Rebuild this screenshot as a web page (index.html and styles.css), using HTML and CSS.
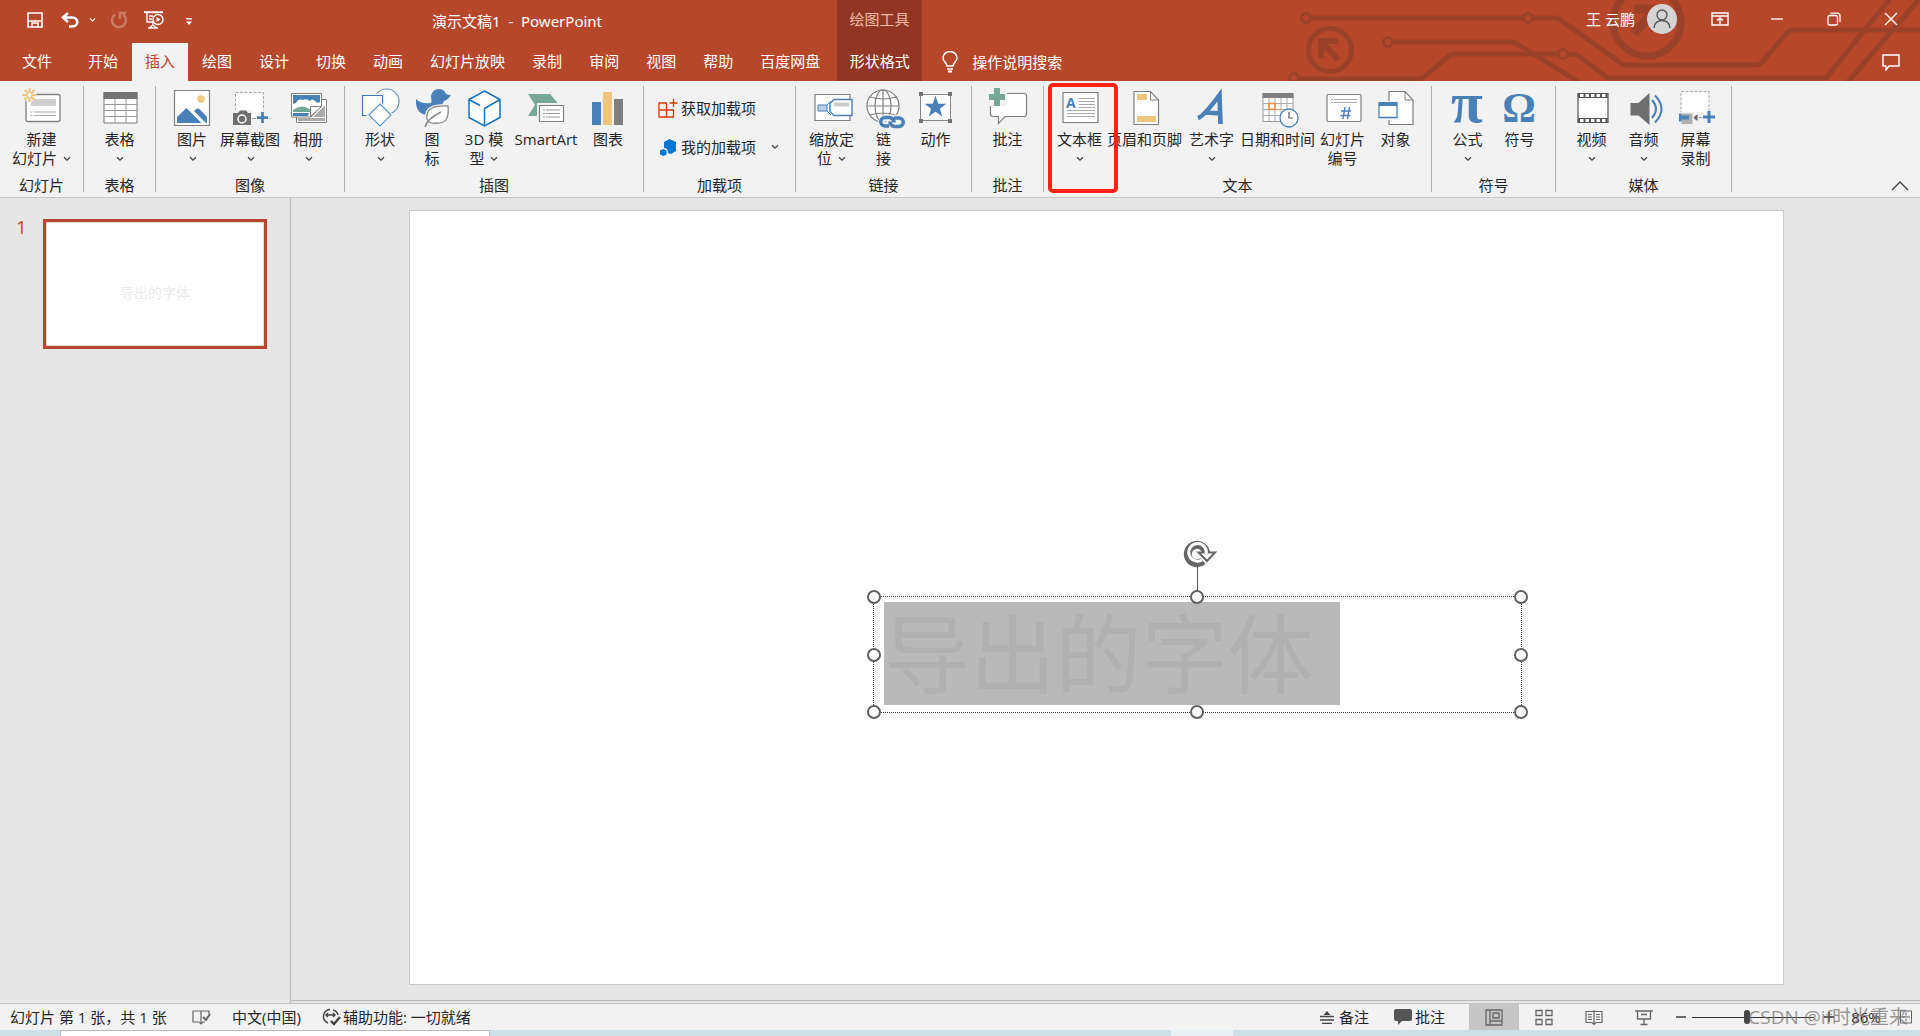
FILE: index.html
```html
<!DOCTYPE html>
<html lang="zh-CN">
<head>
<meta charset="utf-8">
<title>演示文稿1 - PowerPoint</title>
<link rel="stylesheet" href="styles.css">
</head>
<body>
<svg class="defs" aria-hidden="true">
  <symbol id="chev" viewBox="0 0 8 6"><path d="M1 1.200l3 3 3-3" fill="none" stroke="currentColor" stroke-width="1.300"/></symbol>
  <symbol id="plus" viewBox="0 0 12 12"><path d="M4.500 0h3v4.500H12v3H7.500V12h-3V7.500H0v-3h4.500z"/></symbol>
</svg>

<header class="header">
  <svg class="circuit" viewBox="0 0 640 81" fill="none" stroke="#9c4129" stroke-width="5" aria-hidden="true">
    <path d="M31 18H243M253 18H275q4 0 7 3L338 61q4 4 8 4H476q4 0 6-3L506 34q3-4 7-4H640"/>
    <path d="M113 42H230q5 0 9 3L302 84"/>
    <path d="M19 79H138q4 0 7-3L168 57q3-3 7-3H278M288 54H292q4 0 8 3L328 78H546L612-4M566 84L642-4"/>
    <g stroke-width="3"><circle cx="26" cy="18" r="4.500"/><circle cx="248" cy="18" r="4.500"/><circle cx="108" cy="42" r="4.500"/><circle cx="283" cy="54" r="4.500"/><circle cx="14" cy="78" r="4.500"/></g>
    <circle cx="50" cy="50" r="21.500"/><circle cx="367" cy="22" r="34" stroke-width="7"/>
    <path d="M41 58V41H58M41 41L58 60" stroke-width="6"/>
    <path d="M354 9H375V32M375 9L354 34" stroke-width="9"/>
  </svg>
  <div class="titlebar">
    <div class="qat">
      <button class="qb save" aria-label="保存"><svg width="16" height="16" viewBox="0 0 16 16" fill="none" stroke="#fff" stroke-width="1.600"><path d="M1 1h14v14H1zM1 9h14"/><path d="M5 15v-4h6v4" stroke-width="1.500"/></svg></button>
      <button class="qb undo" aria-label="撤消"><svg width="18" height="16" viewBox="0 0 18 16" fill="none" stroke="#fff" stroke-width="2.600"><path d="M7 1L2 5.500l5 4.500M2.500 5.500H11c7 0 7 9 0 9H8"/></svg></button>
      <button class="qb drop" aria-label="撤消列表"><svg width="7" height="6"><use href="#chev"/></svg></button>
      <button class="qb redo" aria-label="重复" disabled><svg width="18" height="18" viewBox="0 0 18 18" fill="none" stroke="#cc7b64" stroke-width="2.400"><path d="M5 3.500A7 7 0 1 0 13 3.500M10 8V2h6"/></svg></button>
      <button class="qb show" aria-label="从头开始"><svg width="20" height="18" viewBox="0 0 20 18" fill="none" stroke="#fff" stroke-width="1.400"><path d="M0 1.200h19" stroke-width="2"/><path d="M3 2v9h6M5 5h4M5 8h3M9 11v3M5 17l4-3 4 3M4 17h10"/><circle cx="14" cy="8.500" r="5"/><path d="M12.500 6l4 2.500-4 2.500z" fill="#fff" stroke="none"/></svg></button>
      <button class="qb more" aria-label="自定义"><svg width="6" height="8" viewBox="0 0 6 8" fill="#fff"><path d="M0 0h6v1.500H0zM0 3.500h6L3 7z"/></svg></button>
    </div>
    <h1 class="doc">演示文稿1&nbsp; -&nbsp; PowerPoint</h1>
    <div class="ctx-title">绘图工具</div>
    <div class="account">
      <span>王 云鹏</span>
      <svg width="30" height="30" viewBox="0 0 30 30" fill="none" stroke="#555" stroke-width="1.400"><circle cx="15" cy="15" r="15" fill="#d4d4d4" stroke="none"/><circle cx="15" cy="11" r="5"/><path d="M7 24c0-10 16-10 16 0"/></svg>
    </div>
    <div class="winctl" role="group">
      <button aria-label="功能区显示选项"><svg width="18" height="14" viewBox="0 0 18 14" fill="none" stroke="#fff" stroke-width="1.400"><path d="M1 1h16v12H1zM1 4h16M9 12V6M6 8.500L9 6l3 2.500"/></svg></button>
      <button aria-label="最小化"><svg width="14" height="14" viewBox="0 0 14 14"><path d="M1 7h12" stroke="#fff" stroke-width="1.300"/></svg></button>
      <button aria-label="还原"><svg width="14" height="14" viewBox="0 0 14 14" fill="none" stroke="#fff" stroke-width="1.300"><rect x="1" y="3.500" width="9.500" height="9.500" rx="1.500"/><path d="M3.500 1.200H10q3 0 3 3V10"/></svg></button>
      <button aria-label="关闭"><svg width="14" height="14" viewBox="0 0 14 14"><path d="M1 1l12 12M13 1L1 13" stroke="#fff" stroke-width="1.400"/></svg></button>
    </div>
  </div>
  <nav class="tabs">
    <button class="file">文件</button>
    <button>开始</button><button class="active">插入</button><button>绘图</button><button>设计</button><button>切换</button><button>动画</button><button>幻灯片放映</button><button>录制</button><button>审阅</button><button>视图</button><button>帮助</button><button>百度网盘</button><button class="ctx">形状格式</button>
    <label class="tell"><svg width="16" height="22" viewBox="0 0 16 22" fill="none" stroke="#fff" stroke-width="1.500"><path d="M5 15c0-3-4-4-4-8a7 6.500 0 0 1 14 0c0 4-4 5-4 8zM5 18h6"/><path d="M6 20.500h4" stroke-width="2"/></svg><input type="text" placeholder="操作说明搜索" aria-label="操作说明搜索"></label>
    <button class="notes" aria-label="批注"><svg width="18" height="17" viewBox="0 0 18 17" fill="none" stroke="#fff" stroke-width="1.400"><path d="M1 1h16v11H7l-3 4v-4H1z"/></svg></button>
  </nav>
</header>

<section class="ribbon" aria-label="插入">
  <div class="group g-slide"><div class="items">
    <button class="tool w64"><svg class="ic" viewBox="0 0 44 42"><rect x="6" y="8.500" width="34" height="27" rx="2" fill="#fff" stroke="#7f7f7f" stroke-width="1.300"/><path d="M11 13h25v7H11z" fill="#d0d0d0"/><path d="M10.500 26h2M14 26h22M10.500 29.500h2M14 29.500h22" stroke="#aaa"/><circle cx="9.500" cy="9" r="7" fill="#f2f2f2"/><path d="M9.500 2v14M2.500 9h14M4.500 4l10 10M14.500 4l-10 10" stroke="#edc57c" stroke-width="2"/><circle cx="9.500" cy="9" r="2.500" fill="#fff" stroke="#edc57c"/></svg><span>新建<br>幻灯片 <svg class="cv"><use href="#chev"/></svg></span></button>
  </div><h2>幻灯片</h2></div>

  <div class="group g-table"><div class="items">
    <button class="tool"><svg class="ic" viewBox="0 0 44 42"><path d="M6 6.500h33V37H6z" fill="#fff" stroke="#777"/><path d="M5.500 6h34v7h-34z" fill="#737373"/><path d="M17 13v24M28 13v24M6 18.500h33M6 24.500h33M6 30.500h33" stroke="#999"/></svg><span>表格<br><svg class="cv"><use href="#chev"/></svg></span></button>
  </div><h2>表格</h2></div>

  <div class="group g-image"><div class="items">
    <button class="tool"><svg class="ic" viewBox="0 0 44 42"><path d="M4.500 4.500h35v35h-35z" fill="#fff" stroke="#7f7f7f" stroke-width="1.200"/><circle cx="31" cy="13" r="3.700" fill="#edc57c"/><path d="M7 37V31l9.500-9L31.500 37zM24 25l3-2.500q1.500-.5 3 1L37 31v6H36z" fill="#4a80b8"/></svg><span>图片<br><svg class="cv"><use href="#chev"/></svg></span></button>
    <button class="tool w64"><svg class="ic" viewBox="0 0 44 42"><path d="M7.500 6.500h28v26h-28z" fill="#fff" stroke="#aaa" stroke-dasharray="3 1.500"/><path d="M4 24h20v16H4z" fill="#f2f2f2"/><path d="M5 27h5l2-2.500h6l2 2.500h3v12H5z" fill="#6f6f6f"/><circle cx="14" cy="33" r="4" fill="none" stroke="#fff" stroke-width="1.500"/><circle cx="34.500" cy="31.500" r="7" fill="#f2f2f2"/><path d="M25 32.500h3" stroke="#999"/><use href="#plus" x="29" y="26" width="11" height="11" fill="#4a80b8"/></svg><span>屏幕截图<br><svg class="cv"><use href="#chev"/></svg></span></button>
    <button class="tool"><svg class="ic" viewBox="0 0 44 42"><path d="M10.500 13.500h30v23h-30z" fill="#fff" stroke="#7f7f7f"/><path d="M12 32h27v3H12zM27 31L39 19v12z" fill="#aaa"/><path d="M5.500 7.500h30V20L25 31H5.500z" fill="#fff" stroke="#7f7f7f"/><path d="M7 9h27v7q-3 2-5-1-3-3-5 0-4-3-7-1-5-2-7 3l-3 1z" fill="#4a80b8"/><path d="M7 24q9-7 18 0v2H7z" fill="#6fa695"/><path d="M7 27h16l-1 3H7z" fill="#4a80b8"/><path d="M24.500 30.500v-10h11z" fill="#fff" stroke="#7f7f7f"/></svg><span>相册<br><svg class="cv"><use href="#chev"/></svg></span></button>
  </div><h2>图像</h2></div>

  <div class="group g-illus"><div class="items">
    <button class="tool"><svg class="ic" viewBox="0 0 44 42" fill="#fff" stroke="#5f94cc" stroke-width="1.200"><circle cx="28.500" cy="15.500" r="12.500"/><path d="M4.500 9.500h20v20h-20z" stroke="#f2f2f2" stroke-width="4"/><path d="M4.500 9.500h20v20h-20z" stroke="#3f78b5"/><path d="M22 18l11 11-11 11-11-11z" stroke="#f2f2f2" stroke-width="4"/><path d="M22 18l11 11-11 11-11-11z"/></svg><span>形状<br><svg class="cv"><use href="#chev"/></svg></span></button>
    <button class="tool"><svg class="ic" viewBox="0 0 44 42"><path d="M6 13q4 5 15 4 1-2 0-6 1-8 8-8 5 0 7 5 2 1 5 1-3 5-7 6-2 3-1 5 0 9-11 9H16Q5 27 6 13z" fill="#4a80b8"/><path d="M38 20q-20-1-21 9-1 4 2 7-3 2-4 5M38 20q2 18-11 17-5 1-8-1M19 36q6-8 12-10" fill="#f2f2f2" stroke="#f2f2f2" stroke-width="4"/><path d="M38 20q-20-1-21 9-1 4 2 7 3 2 8 1 13 1 11-17z" fill="#fff" stroke="#888" stroke-width="1.300"/><path d="M31 26q-14 7-16 15" fill="none" stroke="#888" stroke-width="1.500"/></svg><span>图<br>标</span></button>
    <button class="tool"><svg class="ic" viewBox="0 0 44 42" fill="#fff" stroke="#1273c4" stroke-width="1.500"><path d="M22.500 5L38 13.500v18L22.500 40 7 31.500v-18z"/><path d="M7 13.500l11 6M38 13.500L22.500 22.500V40" fill="none"/></svg><span>3D 模<br>型 <svg class="cv"><use href="#chev"/></svg></span></button>
    <button class="tool w72"><svg class="ic" viewBox="0 0 44 42"><path d="M4 8h22l9.500 11v11H4l7-11z" fill="#76a797"/><path d="M13 17h30v21H13z" fill="#f2f2f2"/><path d="M15.500 19.500h24v16h-24z" fill="#fff" stroke="#7f7f7f" stroke-width="1.200"/><path d="M19 24h2M22 24h14M19 27.500h2M22 27.500h14M19 31h2M22 31h14" stroke="#999"/></svg><span>SmartArt</span></button>
    <button class="tool"><svg class="ic" viewBox="0 0 44 42"><path d="M6 16h9v23H6z" fill="#4a80b8"/><path d="M17 6h9v33h-9z" fill="#edc57c"/><path d="M28 13h9v26h-9z" fill="#7f7f7f"/></svg><span>图表</span></button>
  </div><h2>插图</h2></div>

  <div class="group g-addin"><div class="addins">
    <button><svg width="20" height="20" viewBox="0 0 20 20" fill="none" stroke="#d83b01" stroke-width="1.300"><path d="M1 5h7.500v14H1zM1 12h14.500v7H1M8.500 12v7M15.500 1v8M11.500 5h8"/></svg>获取加载项</button>
    <button><svg width="20" height="20" viewBox="0 0 20 20" fill="#0078d4"><path d="M11.500 2L18 5v9l-5 3-3-1q0-5-4-5V5z"/><path d="M5.500 12l3 1.500v4l-3 1.500-3.500-1.500v-4z"/></svg>我的加载项<svg class="cv"><use href="#chev"/></svg></button>
  </div><h2>加载项</h2></div>

  <div class="group g-link"><div class="items">
    <button class="tool"><svg class="ic" viewBox="0 0 44 42"><path d="M5 8.500h35v26H5z" fill="#fff" stroke="#7f7f7f" stroke-width="1.200"/><path d="M8 19h9v6H8zM17 19l4-4M17 25l4 4" fill="#bccfe2" stroke="#4a80b8"/><path d="M24 13.500h18v16H24l-4-4v-8z" fill="#fff" stroke="#4a80b8" stroke-width="1.400"/><path d="M24 16.500h15v4H24z" fill="#ccc"/></svg><span>缩放定<br>位 <svg class="cv"><use href="#chev"/></svg></span></button>
    <button class="tool"><svg class="ic" viewBox="0 0 44 42" fill="none"><g stroke="#7f7f7f" stroke-width="1.200"><circle cx="21" cy="20" r="16" fill="#fff"/><ellipse cx="21" cy="20" rx="8" ry="16"/><path d="M21 4v32M5 20h32M8 11q13 4 26 0M8 29q13-4 26 0"/></g><g stroke="#f2f2f2" stroke-width="6.500"><rect x="19.500" y="32" width="13" height="8" rx="4"/><rect x="27.500" y="32" width="13" height="8" rx="4"/></g><path d="M27 40h-4a4 4 0 0 1 0-8.500h5q4 1 4 5M32 32h5a4 4 0 0 1 0 8.500h-5q-4-1-4-5" stroke="#4a80b8" stroke-width="3.500"/></svg><span>链<br>接</span></button>
    <button class="tool"><svg class="ic" viewBox="0 0 44 42"><path d="M6.500 8.500h30v26h-30z" fill="#fff" stroke="#888"/><path d="M5 6h4v4H5zM34 6h4v4h-4zM5 33h4v4H5zM34 33h4v4h-4z" fill="#737373"/><path d="M21.500 10l2.800 7.700h8l-6.400 5 2.400 7.800-6.800-4.700-6.800 4.700 2.400-7.800-6.400-5h8z" fill="#4a80b8"/></svg><span>动作</span></button>
  </div><h2>链接</h2></div>

  <div class="group g-note"><div class="items">
    <button class="tool"><svg class="ic" viewBox="0 0 44 42"><path d="M7 7.500h31q2.500 0 2.500 2v18.500q0 2.500-2.500 2.500H19l-6.500 7v-7H7q-2.500 0-2.500-2.500V10z" fill="#fff" stroke="#7f7f7f" stroke-width="1.200"/><path d="M1 1h20v19H1z" fill="#f2f2f2"/><path d="M8 2h6v6h5v6h-5v6H8v-6H3V8h5z" fill="#76a797"/></svg><span>批注</span></button>
  </div><h2>批注</h2></div>

  <div class="group g-text"><div class="items">
    <div class="marked"><button class="tool"><svg class="ic" viewBox="0 0 44 42"><path d="M5 6.500h35v30H5z" fill="#fff" stroke="#7f7f7f" stroke-width="1.200"/><text x="8" y="22" class="gA">A</text><path d="M21 12.500h16M21 15.500h16M21 18.500h16M21 21.500h16M9 24.500h28M9 27.500h28M9 30.500h28" stroke="#aaa"/></svg><span>文本框<br><svg class="cv"><use href="#chev"/></svg></span></button><i class="mark"></i></div>
    <button class="tool w78"><svg class="ic" viewBox="0 0 44 42"><path d="M11 5.500h16.500l8 8.500v24.500H11z" fill="#fff" stroke="#7f7f7f" stroke-width="1.200"/><path d="M27.500 5.500V14h8" fill="none" stroke="#7f7f7f"/><path d="M14 8h10v6H14zM14 30h19v6H14z" fill="#edc57c"/></svg><span>页眉和页脚</span></button>
    <button class="tool w56"><svg class="ic" viewBox="0 0 44 42"><path d="M8 32Q14 30 29.500 9L30.500 38M16 26.500l14 1" fill="none" stroke="#4a80b8" stroke-width="4.600"/></svg><span>艺术字<br><svg class="cv"><use href="#chev"/></svg></span></button>
    <button class="tool w76"><svg class="ic" viewBox="0 0 44 42"><path d="M7 8h30v27.500H7z" fill="#fff" stroke="#999"/><path d="M6.500 7h31v5h-31z" fill="#7f7f7f"/><path d="M13 12v23M19 12v23M25 12v23M31 12v23M7 17.500h30M7 23.500h30M7 29.500h30" stroke="#aaa"/><path d="M13 17.500h6v6h-6z" fill="#fff" stroke="#ea8a3a" stroke-width="1.500"/><circle cx="33" cy="32" r="9" fill="#fff" stroke="#4a80b8" stroke-width="1.300"/><path d="M33 26v6h4" fill="none" stroke="#555" stroke-width="1.200"/></svg><span>日期和时间</span></button>
    <button class="tool w54"><svg class="ic" viewBox="0 0 44 42"><rect x="6" y="8.500" width="34" height="27" rx="1.500" fill="#fff" stroke="#7f7f7f" stroke-width="1.200"/><path d="M10 13.500h2M13 13.500h23M10 16.500h2M13 16.500h23" stroke="#aaa"/><path d="M24 21l-2 12M28.500 21l-2 12M20 25h10M19.500 29.500h10" stroke="#4a80b8" stroke-width="1.400"/></svg><span>幻灯片<br>编号</span></button>
    <button class="tool"><svg class="ic" viewBox="0 0 44 42"><path d="M15 5.500h16l8 8.500v24.500H15z" fill="#fff" stroke="#7f7f7f" stroke-width="1.200"/><path d="M31 5.500V14h8" fill="none" stroke="#7f7f7f"/><path d="M3 15h22v19H3z" fill="#f2f2f2"/><path d="M5 17h18v14.500H5z" fill="#fff" stroke="#4a80b8" stroke-width="1.300"/><path d="M5 16h18v4H5z" fill="#4a80b8"/></svg><span>对象</span></button>
  </div><h2>文本</h2></div>

  <div class="group g-sym"><div class="items">
    <button class="tool"><svg class="ic" viewBox="0 0 44 42"><text x="21" y="36" class="gS gPi">π</text></svg><span>公式<br><svg class="cv"><use href="#chev"/></svg></span></button>
    <button class="tool"><svg class="ic" viewBox="0 0 44 42"><text x="21" y="36" class="gS">Ω</text></svg><span>符号</span></button>
  </div><h2>符号</h2></div>

  <div class="group g-media"><div class="items">
    <button class="tool"><svg class="ic" viewBox="0 0 44 42"><path d="M8 7.500h30v29H8z" fill="#fff" stroke="#555" stroke-width="1.200"/><path d="M8 11.500h30M8 32.500h30" stroke="#555"/><path d="M8 9.500h30M8 34.500h30" stroke="#555" stroke-width="4" stroke-dasharray="2 3.500"/></svg><span>视频<br><svg class="cv"><use href="#chev"/></svg></span></button>
    <button class="tool"><svg class="ic" viewBox="0 0 44 42"><path d="M8.500 17h8L27.500 7v32l-11-9.500h-8z" fill="#6f6f6f"/><path d="M30 14q8 9 0 18M33 9.500q13 13.500 0 27" fill="none" stroke="#4a80b8" stroke-width="2"/></svg><span>音频<br><svg class="cv"><use href="#chev"/></svg></span></button>
    <button class="tool"><svg class="ic" viewBox="0 0 44 42"><path d="M7 5.500h28v26H7z" fill="#fff" stroke="#aaa" stroke-dasharray="3 1.500"/><path d="M3 26h40v14H3z" fill="#f2f2f2"/><path d="M7.500 27.500h11V38h-11z" fill="#b0b0b0"/><path d="M5 27.500h2.500v2H15v4H7.500v2H5z" fill="#4a80b8"/><path d="M20 31l3.500-3v7L20 32.500z" fill="#666"/><path d="M25 31.500h3" stroke="#999"/><use href="#plus" x="29" y="25" width="12" height="12" fill="#4a80b8"/></svg><span>屏幕<br>录制</span></button>
  </div><h2>媒体</h2></div>
  <button class="collapse" aria-label="折叠功能区"><svg width="18" height="11" viewBox="0 0 18 11"><path d="M1 10l8-8 8 8" fill="none" stroke="#444" stroke-width="1.400"/></svg></button>
</section>

<main class="work">
  <aside class="thumbs"><span class="num">1</span><div class="thumb">导出的字体</div></aside>
  <section class="stage">
    <div class="slide">
      <div class="tbox">
        <span class="sel">导出的字体</span>
        <i class="stem"></i>
        <svg class="rot" width="36" height="30" viewBox="0 0 36 30" fill="none"><path d="M21 22A9.200 9.200 0 1 1 24.200 15" stroke="#666" stroke-width="8"/><path d="M16.500 13.500H33L25 22z" fill="#fff" stroke="#666" stroke-width="2"/><path d="M20 21A8.800 8.800 0 1 1 24 16" stroke="#fff" stroke-width="3"/></svg>
        <i class="h nw"></i><i class="h n"></i><i class="h ne"></i><i class="h w"></i><i class="h e"></i><i class="h sw"></i><i class="h s"></i><i class="h se"></i>
      </div>
    </div>
  </section>
</main>

<footer class="status">
  <span class="count">幻灯片 第 1 张，共 1 张</span>
  <button class="spell" aria-label="拼写检查"><svg width="19" height="16" viewBox="0 0 19 16" fill="none" stroke="#666" stroke-width="1.200"><path d="M9 2H1v11h6l2 2 2-2h2M9 2v12M9 2h8v3"/><path d="M11 8l3 3 4-6" stroke-width="2"/></svg></button>
  <button class="lang">中文(中国)</button>
  <button class="acc"><svg width="20" height="18" viewBox="0 0 20 18" fill="none" stroke="#444" stroke-width="1.400"><path d="M9 1.500A7 7 0 0 0 7 15M12 2q4 1 5 5M5 7h9M7 5L5 7l2 2M12 5l2 2-2 2"/><path d="M10 13l3 3 6-7" stroke-width="2.400"/></svg>辅助功能: 一切就绪</button>
  <div class="right">
    <button class="rb"><svg width="14" height="14" viewBox="0 0 14 14" stroke="#444" stroke-width="1.300"><path d="M0 6.500h14M0 10h14M2 13.300h10"/><path d="M3.500 5L7 1l3.500 4z" fill="#444" stroke="none"/></svg>备注</button>
    <button class="rb cm"><svg width="18" height="16" viewBox="0 0 18 16" fill="#555"><path d="M2 0h14q2 0 2 2v8q0 2-2 2H8l-4 4v-4H2q-2 0-2-2V2q0-2 2-2z"/></svg>批注</button>
    <button class="view on" aria-label="普通"><svg width="18" height="17" viewBox="0 0 18 17" fill="none" stroke="#666" stroke-width="1.300"><path d="M1 1h16v15H1zM5 1v15M5 12h12M8 4h6v5H8z"/></svg></button>
    <button class="view" aria-label="幻灯片浏览"><svg width="18" height="17" viewBox="0 0 18 17" fill="none" stroke="#666" stroke-width="1.300"><path d="M1 1.500h6v5H1zM11 1.500h6v5h-6zM1 10.500h6v5H1zM11 10.500h6v5h-6z"/></svg></button>
    <button class="view" aria-label="阅读视图"><svg width="18" height="17" viewBox="0 0 18 17" fill="none" stroke="#666" stroke-width="1.200"><path d="M9 2.500H1v11h6l2 2 2-2h6v-11zM9 1v14M3 5.500h4M3 8h4M3 10.500h4M11 5.500h4M11 8h4M11 10.500h4"/></svg></button>
    <button class="view" aria-label="幻灯片放映"><svg width="18" height="17" viewBox="0 0 18 17" fill="none" stroke="#666" stroke-width="1.300"><path d="M0 2h18M2.500 2v8h13V2M9 10v5M5.500 15.500h7M6 5.500h6"/></svg></button>
    <div class="zoom">
      <button aria-label="缩小"><svg width="10" height="10"><path d="M0 5h10" stroke="#333" stroke-width="1.400"/></svg></button>
      <input type="range" min="0" max="100" value="45" aria-label="缩放">
      <button aria-label="放大"><svg width="10" height="10"><path d="M0 5h10M5 0v10" stroke="#333" stroke-width="1.400"/></svg></button>
      <button class="pct">86%</button>
      <button aria-label="适应窗口"><svg width="12" height="14" viewBox="0 0 12 14" fill="none" stroke="#666"><path d="M.5 1h11v12H.5zM6 2.500v3M6 8.500v3M2 7h3M7 7h3"/></svg></button>
      <span class="wm">CSDN @if时光重来</span>
    </div>
  </div>
</footer>
<div class="desk"><div class="win"></div><div class="task"></div></div>
</body>
</html>
```
FILE: styles.css
```css
* { box-sizing: border-box; }
body { margin: 0; height: 100vh; display: flex; flex-direction: column; overflow: hidden; background: #e6e6e6; color: #262626; font: 15px/19px "Open Sans", "Noto Sans CJK SC", sans-serif; }
button, input { font: inherit; color: inherit; border: 0; padding: 0; margin: 0; background: none; white-space: nowrap; }
h1, h2 { margin: 0; font: inherit; }
svg { display: block; flex: none; }
i { display: block; }
.defs { position: absolute; width: 0; height: 0; }

/* title bar and tabs */
.header { position: relative; background: #b7472a; color: #fff; flex: none; }
.circuit { position: absolute; right: 0; top: 0; width: 640px; height: 81px; }
.titlebar { position: relative; display: flex; height: 43px; }
.qat { display: flex; align-items: center; width: 432px; height: 40px; padding-left: 27px; flex: none; }
.undo { margin-left: 18px; }
.drop { margin-left: 10px; }
.redo { margin-left: 14px; }
.show { margin-left: 16px; }
.more { margin-left: 22px; padding-top: 4px; }
.doc { width: 405px; flex: none; padding-top: 12px; font-family: "Noto Sans", "Noto Sans CJK SC", sans-serif; }
.ctx-title { width: 85px; flex: none; padding-top: 10px; text-align: center; background: #903622; color: #f5b9a3; }
.account { margin-left: auto; display: flex; align-items: center; gap: 12px; height: 38px; }
.winctl { display: flex; height: 38px; margin-left: 14px; padding-right: 1px; }
.winctl button { width: 57px; display: grid; place-items: center; }
.tabs { position: relative; display: flex; gap: 1px; height: 38px; }
.tabs button { padding: 0 13px 2px; }
.tabs .file { width: 74px; text-align: center; }
.tabs .active { background: #f2f2f2; color: #b7472a; }
.tabs .ctx { width: 85px; margin-left: 3px; padding: 0 0 2px; background: #903622; }
.tell { display: flex; align-items: center; gap: 14px; margin-left: 19px; }
.tell input { width: 120px; height: 36px; outline: 0; }
.tell input::placeholder { color: #fff; opacity: 1; }
.tabs .notes { margin-left: auto; padding: 0 20px 0 0; }

/* ribbon */
.ribbon { flex: none; display: flex; height: 117px; padding-top: 5px; background: #f2f2f2; border-bottom: 1px solid #c6c6c6; }
.group { flex: none; height: 106px; display: flex; flex-direction: column; border-right: 1px solid #b1b1b1; }
.group h2 { height: 16px; line-height: 19px; text-align: center; }
.items { display: flex; justify-content: center; height: 90px; }
.g-slide { width: 84px; }
.g-table, .g-note { width: 72px; }
.g-image { width: 189px; }
.g-illus { width: 299px; }
.g-addin { width: 152px; }
.g-link, .g-media { width: 176px; }
.g-text { width: 388px; }
.g-sym { width: 124px; }
.tool { width: 52px; height: 84px; display: flex; flex-direction: column; align-items: center; gap: 2px; line-height: 19px; }
.tool span { flex: none; height: 38px; }
.w54 { width: 54px; }
.w56 { width: 56px; }
.w64 { width: 64px; }
.w72 { width: 72px; }
.w76 { width: 76px; }
.w78 { width: 78px; }
.ic { width: 44px; height: 42px; overflow: visible; }
.cv { display: inline-block; width: 8px; height: 6px; color: #444; vertical-align: 2px; margin-left: 2px; }
.gA { font: bold 14px "Open Sans", sans-serif; fill: #4a80b8; }
.gS { font: bold 42px "Liberation Serif", serif; fill: #4a80b8; text-anchor: middle; }
.gPi { font-size: 58px; }
.marked { position: relative; }
.mark { position: absolute; z-index: 1; left: -6px; top: -3px; width: 70px; height: 110px; border: 4px solid #ff2116; border-radius: 5px; pointer-events: none; }
.addins { height: 90px; padding: 12px 0 0 14px; display: flex; flex-direction: column; gap: 19px; align-items: flex-start; }
.addins button { display: flex; align-items: center; gap: 3px; height: 20px; }
.addins .cv { margin-left: 12px; }
.collapse { margin-left: auto; padding: 88px 11px 0 0; }

/* workspace */
.work { flex: 1; min-height: 0; display: flex; }
.thumbs { flex: none; width: 291px; padding: 21px 23px 0 16px; display: flex; border-right: 1px solid #b9b9b9; }
.num { width: 27px; font-size: 19px; line-height: 16px; color: #d04423; }
.thumb { width: 224px; height: 130px; border: 3px solid #b7472a; outline: 1px solid #ddd; outline-offset: -4px; background: #fff; color: #ebebeb; font-size: 14px; line-height: 142px; text-align: center; }
.stage { flex: 1; min-width: 0; padding: 12px 136px 0 118px; margin-bottom: 2px; border-bottom: 1px solid #b9b9b9; }
.slide { position: relative; aspect-ratio: 1375 / 775; background: #fff; border: 1px solid #c6c6c6; }
.tbox { position: absolute; left: 33.700%; top: 49.800%; width: 47.300%; height: 15.200%; border: 1px dotted #333; padding: 5px 0 0 10px; }
.sel { display: block; width: 456px; height: 103px; background: #b9b9b9; color: #b0b0b0; font-size: 86px; line-height: 103px; }
.h { position: absolute; width: 14px; height: 14px; margin: -7px; border: 2px solid #606060; border-radius: 50%; background: #fff; }
.nw, .n, .ne { top: 0; }
.w, .e { top: 50%; }
.sw, .s, .se { top: 100%; }
.nw, .w, .sw { left: 0; }
.n, .s { left: 50%; }
.ne, .e, .se { left: 100%; }
.stem { position: absolute; left: 50%; top: -32px; width: 1px; height: 32px; background: #555; }
.rot { position: absolute; left: 50%; top: -58px; margin-left: -15px; }

/* status bar */
.status { flex: none; height: 27px; display: flex; align-items: center; padding-left: 10px; background: #f2f2f2; border-top: 1px solid #c0c0c0; }
.count { width: 182px; }
.spell { width: 40px; }
.lang { width: 89px; text-align: left; }
.acc { display: flex; align-items: center; gap: 2px; }
.right { margin-left: auto; display: flex; align-items: center; height: 26px; }
.rb { display: flex; align-items: center; gap: 5px; margin-right: 25px; }
.rb.cm { gap: 3px; margin-right: 24px; }
.view { width: 50px; height: 26px; display: grid; place-items: center; }
.view.on { background: #c6c6c6; }
.zoom { position: relative; display: flex; align-items: center; padding: 0 8px 0 7px; }
.zoom input { appearance: none; width: 122px; height: 14px; margin: 0 10px 0 6px; background: linear-gradient(#333, #333) center / 100% 1px no-repeat; }
.zoom input::-webkit-slider-thumb { appearance: none; width: 6px; height: 14px; border-radius: 3px; background: #444; }
.pct { width: 32px; margin: 0 18px 0 16px; }
.wm { position: absolute; right: 12px; top: -1px; font-size: 19px; line-height: 20px; color: #777; opacity: .75; white-space: nowrap; }
.desk { flex: none; height: 6px; display: flex; background: #cde0e5; }
.win { width: 430px; margin-left: 60px; background: #fff; border: 1px solid #bbb; border-bottom: 0; }
.task { width: 62px; margin-left: 681px; background: #e9f1f4; }
```
